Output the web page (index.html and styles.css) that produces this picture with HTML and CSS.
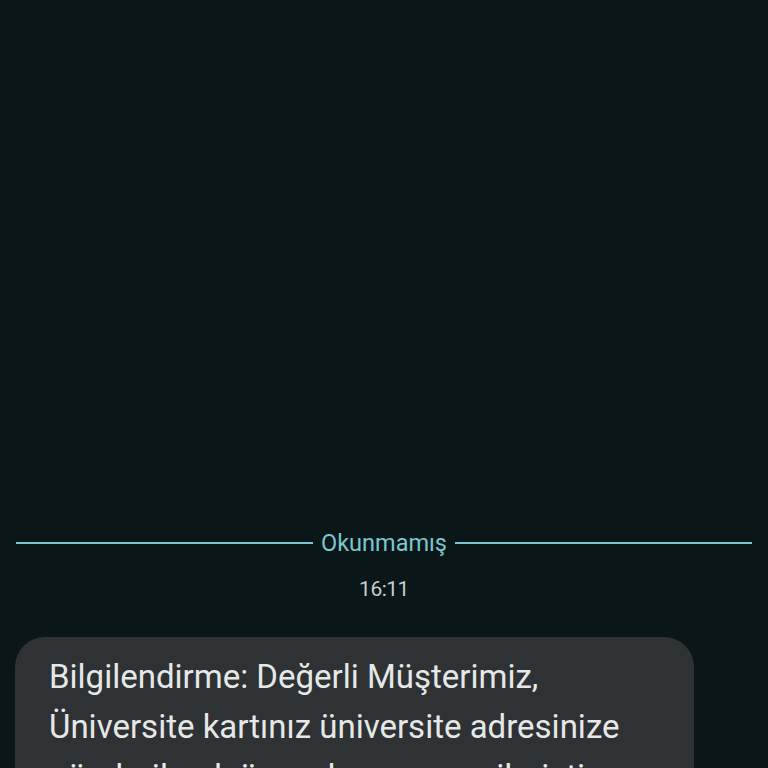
FILE: index.html
```html
<!DOCTYPE html>
<html lang="tr">
<head>
<meta charset="utf-8">
<title>Mesajlar</title>
<link rel="stylesheet" href="styles.css">
</head>
<body>
<main class="thread">
  <div class="divider">
    <span class="divider-line"></span>
    <span class="divider-label">Okunmamış</span>
    <span class="divider-line"></span>
  </div>
  <div class="time">16:11</div>
  <div class="bubble">
    <p class="bubble-text">Bilgilendirme: Değerli Müşterimiz, Üniversite kartınız üniversite adresinize gönderilmek üzere kargoya verilmiştir. Kartınızı teslim aldıktan sonra aktivasyon işlemini tamamlayabilirsiniz.</p>
  </div>
</main>
</body>
</html>
```
FILE: styles.css
```css
html, body {
  margin: 0;
  padding: 0;
}
body {
  background: #0b1619;
  height: 768px;
  overflow: hidden;
  font-family: Roboto, "Noto Sans", "Liberation Sans", sans-serif;
}
.thread {
  padding-top: 529px;
  display: flex;
  flex-direction: column;
}
.divider {
  display: flex;
  align-items: center;
  gap: 8px;
  padding: 0 16px;
  height: 28px;
}
.divider-line {
  flex: 1;
  height: 2px;
  background: #7cc6cf;
}
.divider-label {
  color: #7cc6cf;
  font-size: 23.5px;
  line-height: 28px;
}
.time {
  margin-top: 18px;
  text-align: center;
  color: #c9cdcd;
  font-size: 21px;
  letter-spacing: -0.5px;
  line-height: 28px;
}
.bubble {
  margin-top: 34px;
  margin-left: 15px;
  width: 679px;
  box-sizing: border-box;
  background: #2e3234;
  border-radius: 30px;
  padding: 15px 30px 20px 34px;
}
.bubble-text {
  margin: 0;
  color: #e6e8e8;
  font-size: 33px;
  line-height: 50px;
}
```
